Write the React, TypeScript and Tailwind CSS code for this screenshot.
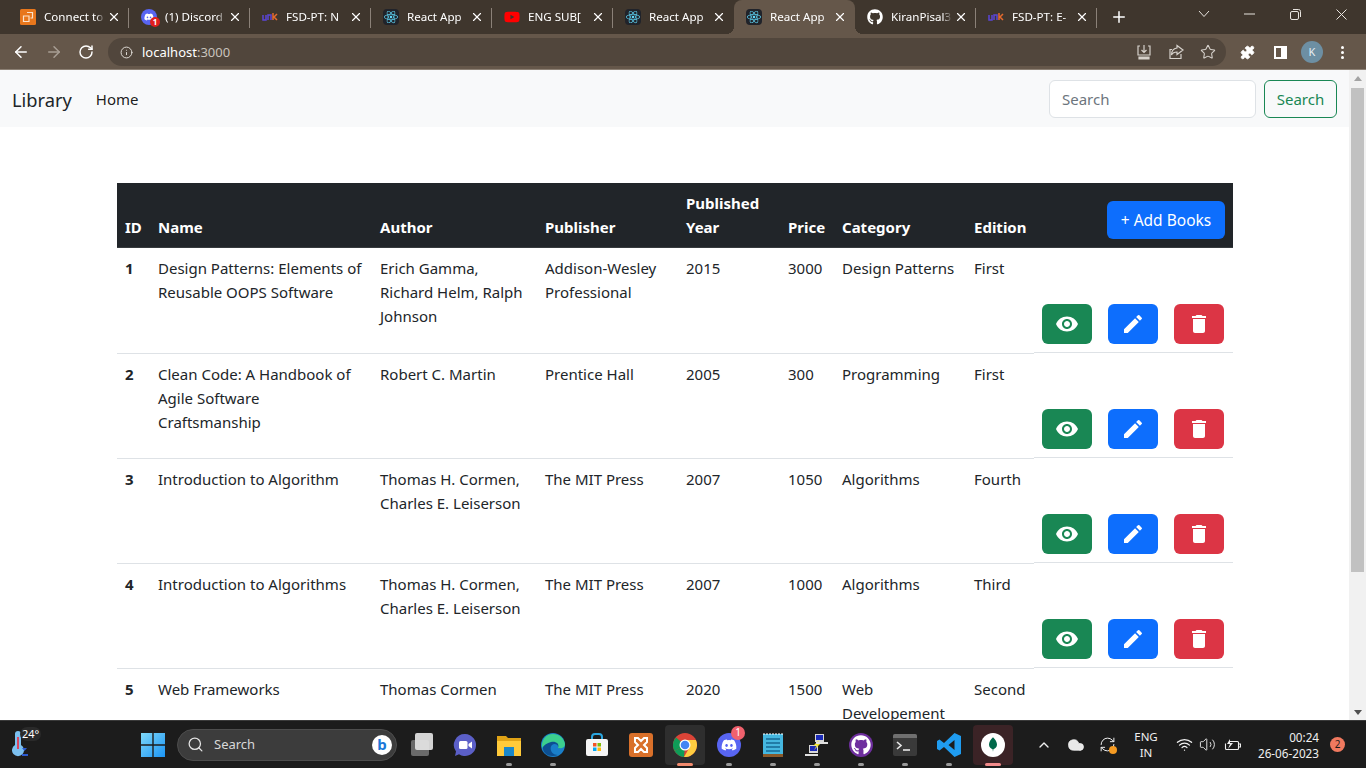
import React from "react";
import { FaDiscord, FaGithub, FaReact, FaYoutube } from "react-icons/fa";
import { MdVisibility, MdEdit, MdDelete } from "react-icons/md";
import { ArrowLeft, ArrowRight, RotateCw, Info, Star, X, Plus, Puzzle, Search, ChevronUp, Wifi, Volume2, RefreshCw, Cloud } from "lucide-react";

const UniIcon = () => (
  <svg width="16" height="16" viewBox="0 0 16 16">
    <path d="M1 6v5h3V6" fill="none" stroke="#5b45d6" strokeWidth="1.5" />
    <path d="M6 11V6h3v5" fill="none" stroke="#5b45d6" strokeWidth="1.5" />
    <path d="M11 4v7M15 5l-3 3 3 3" fill="none" stroke="#e46a2e" strokeWidth="1.5" />
  </svg>
);
const ReactFav = () => (
  <span className="flex h-4 w-4 items-center justify-center rounded-sm bg-[#20232a]">
    <FaReact size={14} color="#61dafb" />
  </span>
);

type Tab = { title: string; icon: React.ReactNode; active?: boolean };
const tabs: Tab[] = [
  { title: "Connect to", icon: <svg width="16" height="16" viewBox="0 0 16 16"><rect width="16" height="16" rx="1.500" fill="#e8771c" /><path d="M7 3.500h5.500V9H10.500M3.500 7H9v5.500H3.500z" fill="none" stroke="#fbe3cc" strokeWidth="1.200" /></svg> },
  { title: "(1) Discord", icon: <span className="relative flex h-4 w-4 items-center justify-center rounded-full bg-[#5865f2]"><FaDiscord size={10} color="white" /><span className="absolute -bottom-[2px] -right-[3px] flex h-[10px] w-[10px] items-center justify-center rounded-full bg-[#e01e1e] text-[8px] font-bold leading-none text-white">1</span></span> },
  { title: "FSD-PT: N", icon: <UniIcon /> },
  { title: "React App", icon: <ReactFav /> },
  { title: "ENG SUB[", icon: <FaYoutube size={16} color="#f00" /> },
  { title: "React App", icon: <ReactFav /> },
  { title: "React App", icon: <ReactFav />, active: true },
  { title: "KiranPisal3", icon: <FaGithub size={16} color="white" /> },
  { title: "FSD-PT: E-", icon: <UniIcon /> },
];

const books = [
  ["1", "Design Patterns: Elements of Reusable OOPS Software", "Erich Gamma, Richard Helm, Ralph Johnson", "Addison-Wesley Professional", "2015", "3000", "Design Patterns", "First"],
  ["2", "Clean Code: A Handbook of Agile Software Craftsmanship", "Robert C. Martin", "Prentice Hall", "2005", "300", "Programming", "First"],
  ["3", "Introduction to Algorithm", "Thomas H. Cormen, Charles E. Leiserson", "The MIT Press", "2007", "1050", "Algorithms", "Fourth"],
  ["4", "Introduction to Algorithms", "Thomas H. Cormen, Charles E. Leiserson", "The MIT Press", "2007", "1000", "Algorithms", "Third"],
  ["5", "Web Frameworks", "Thomas Cormen", "The MIT Press", "2020", "1500", "Web Developement", "Second"],
];

const ChromeBar = () => (
  <div className="shrink-0">
    <div className="flex h-[34px] items-start bg-[#3f362d] pl-[8px]">
      {tabs.map((t, i) => {
        const next = tabs[i + 1];
        const sep = !t.active && !(next && next.active);
        return (
          <div key={i} className={`relative flex h-[34px] w-[121px] shrink-0 items-center pl-[12px] ${t.active ? "rounded-t-lg bg-[#65574a]" : ""}`}>
            {t.active && <span className="absolute -left-[8px] bottom-0 h-[8px] w-[8px] bg-[radial-gradient(circle_at_0_0,transparent_8px,#65574a_8px)]" />}
            {t.active && <span className="absolute -right-[8px] bottom-0 h-[8px] w-[8px] bg-[radial-gradient(circle_at_100%_0,transparent_8px,#65574a_8px)]" />}
            <span className="flex w-[16px] shrink-0 items-center justify-center">{t.icon}</span>
            <span className="ml-[8px] w-[61px] overflow-hidden whitespace-nowrap text-[11.6px] text-white [mask-image:linear-gradient(to_right,black_85%,transparent)]">{t.title}</span>
            <X size={14} color="white" strokeWidth={2} className="ml-[2px]" />
            {sep && <span className="absolute right-0 top-[8px] h-[20px] w-px bg-[#8b8178]" />}
          </div>
        );
      })}
      <div className="flex h-[34px] w-[37px] items-center justify-center pl-[6px]"><Plus size={18} color="white" strokeWidth={2} /></div>
      <div className="flex h-[28px] flex-1 items-center text-[#e8e4df]">
        <svg width="12" height="8" viewBox="0 0 12 8" fill="none" stroke="currentColor" strokeWidth="1" className="ml-[64px]"><path d="M1 1l5 5.500L11 1" /></svg>
        <svg width="11" height="2" viewBox="0 0 11 2" className="ml-[34px]"><path d="M0 1h11" stroke="currentColor" strokeWidth="1" /></svg>
        <svg width="11" height="11" viewBox="0 0 11 11" fill="none" stroke="currentColor" strokeWidth="1" className="ml-[35px]"><rect x="0.500" y="2.500" width="8" height="8" rx="1.500" /><path d="M3 .5h5.500a2 2 0 0 1 2 2V8" /></svg>
        <svg width="11" height="11" viewBox="0 0 11 11" fill="none" stroke="currentColor" strokeWidth="1" className="ml-[35px]"><path d="M.5.5l10 10M10.500.5l-10 10" /></svg>
      </div>
    </div>
    <div className="flex h-[36px] items-start border-b border-[#8c8074] bg-[#65574a] pl-[12px] pt-[4px]">
      <div className="flex h-[28px] items-center">
        <ArrowLeft size={18} color="white" strokeWidth={2} />
        <ArrowRight size={18} color="#a89e94" strokeWidth={2} className="ml-[15px]" />
        <RotateCw size={16} color="white" strokeWidth={2.2} className="ml-[15px]" />
      </div>
      <div className="ml-[14px] flex h-[28px] w-[1118px] items-center rounded-full bg-[#51463c] pl-[12px]">
        <Info size={13} color="#e0dcd7" strokeWidth={1.8} />
        <span className="ml-[9px] pt-[1px] text-[13px] text-white">localhost<span className="text-[#c9c3bc]">:3000</span></span>
        <div className="ml-auto mr-[10px] flex items-center gap-[16px] text-[#d6d1cb]">
          <svg width="16" height="16" viewBox="0 0 16 16" fill="none" stroke="currentColor" strokeWidth="1.2"><path d="M4 2H2v9h12V2h-2M8 1v7M5.500 6L8 8.500 10.500 6" /><path d="M3 13h10v2H3z" fill="currentColor" /></svg>
          <svg width="16" height="16" viewBox="0 0 16 16" fill="none" stroke="currentColor" strokeWidth="1.2"><path d="M9 1.500l6 4.500-6 4.500V8C6 8 4.500 9 3.500 11c0-4 2-6.500 5.500-7zM13 10v4.500H2v-9h2" /></svg>
          <Star size={16} strokeWidth={1.6} />
        </div>
      </div>
      <div className="flex h-[28px] items-center text-white">
        <Puzzle size={15} fill="white" strokeWidth={1.5} className="ml-[14px]" />
        <span className="ml-[19px] h-[13px] w-[13px] border-2 border-r-[6px] border-white" />
        <span className="ml-[14px] flex h-[22px] w-[22px] items-center justify-center rounded-full bg-[#6d8fa3] text-[11px] text-[#e8eef2]">K</span>
        <span className="ml-[18px] flex flex-col gap-[2px]"><i className="h-[3px] w-[3px] rounded-full bg-white" /><i className="h-[3px] w-[3px] rounded-full bg-white" /><i className="h-[3px] w-[3px] rounded-full bg-white" /></span>
      </div>
    </div>
  </div>
);

const Navbar = () => (
  <nav className="flex h-[57px] items-center bg-[#f8f9fa] pl-[12px] pr-[12px]">
    <span className="pt-[3px] text-[18.300px] text-[#212529]">Library</span>
    <span className="ml-[24px] pt-[2px] text-[15px] text-[#000000e6]">Home</span>
    <div className="ml-auto flex gap-[8px]">
      <div className="flex h-[38px] w-[207px] items-center rounded-[6px] border border-[#dee2e6] bg-white pl-[12px] pt-[1px] text-[15px] text-[#6c757d]">Search</div>
      <div className="flex h-[38px] w-[73px] items-center justify-center rounded-[6px] border border-[#198754] pt-[1px] text-[15px] text-[#198754]">Search</div>
    </div>
  </nav>
);

const ActionBtn = ({ bg, children }: { bg: string; children: React.ReactNode }) => (
  <span className={`flex h-[40px] w-[50px] items-center justify-center rounded-[6px] ${bg}`}>{children}</span>
);

const BookTable = () => (
  <div className="pl-[117px] pt-[56px]">
    <table className="w-[1116px] table-fixed border-separate border-spacing-0 text-[15px] leading-[24px] text-[#212529]">
      <colgroup>
        <col className="w-[33px]" /><col className="w-[222px]" /><col className="w-[165px]" /><col className="w-[141px]" /><col className="w-[102px]" /><col className="w-[54px]" /><col className="w-[132px]" /><col className="w-[68px]" /><col className="w-[199px]" />
      </colgroup>
      <thead>
        <tr className="bg-[#212529] text-white">
          {["ID", "Name", "Author", "Publisher", "Published Year", "Price", "Category", "Edition"].map((h) => (
            <th key={h} className="border-b border-[#373b3e] p-[8px] text-left align-bottom font-bold">{h}</th>
          ))}
          <th className="border-b border-[#373b3e] p-[8px] align-bottom">
            <span className="ml-auto flex h-[38px] w-[118px] items-center justify-center rounded-[6px] bg-[#0d6efd] text-[15.5px] font-normal text-white">+ Add Books</span>
          </th>
        </tr>
      </thead>
      <tbody>
        <tr className="h-px"><td colSpan={9} className="p-0" /></tr>
        {books.map((b, r) => (
          <tr key={b[0]} className="h-[105px]">
            {b.map((c, i) => (
              <td key={i} className={`border-b border-[#dee2e6] px-[8px] pb-[8px] align-top ${r === 0 ? "pt-[7px]" : "pt-[8px]"} ${i === 0 ? "font-bold" : ""}`}>{c}</td>
            ))}
            <td className="p-0 align-top">
              <div className="flex h-[104px] items-end justify-end gap-[16px] border-b border-[#dee2e6] pb-[8px] pr-[9px]">
                <ActionBtn bg="bg-[#198754]"><MdVisibility size={24} color="white" /></ActionBtn>
                <ActionBtn bg="bg-[#0d6efd]"><MdEdit size={24} color="white" /></ActionBtn>
                <ActionBtn bg="bg-[#dc3545]"><MdDelete size={24} color="white" /></ActionBtn>
              </div>
            </td>
          </tr>
        ))}
      </tbody>
    </table>
  </div>
);

const ScrollBar = () => (
  <div className="flex w-[17px] shrink-0 flex-col items-center bg-[#f1f1f1]">
    <span className="mt-[6px] h-0 w-0 border-x-[4px] border-b-[5px] border-x-transparent border-b-[#a3a3a3]" />
    <span className="mt-[7px] h-[484px] w-[13px] bg-[#c1c1c1]" />
    <span className="mt-auto mb-[5px] h-0 w-0 border-x-[4px] border-t-[5px] border-x-transparent border-t-[#505050]" />
  </div>
);

const TaskItem = ({ children, active, dot, dotColor, bg }: { children: React.ReactNode; active?: boolean; dot?: boolean; dotColor?: string; bg?: string }) => (
  <div className="relative flex h-[48px] w-[44px] shrink-0 items-center justify-center">
    {active && <span className={`absolute left-[2px] top-[4px] h-[40px] w-[40px] rounded-[4px] ${bg}`} />}
    <span className="relative flex h-[24px] w-[24px] items-center justify-center">{children}</span>
    {dot && <span className={`absolute bottom-[3px] left-1/2 h-[3px] -translate-x-1/2 rounded-full ${active ? "w-[16px]" : "w-[6px]"} ${dotColor ?? "bg-[#9a9a9a]"}`} />}
  </div>
);

const Taskbar = () => (
  <div className="flex h-[48px] shrink-0 items-center border-t border-[#3a3a3a] bg-[#1c1c1c] text-white">
    <div className="relative flex h-[48px] w-[131px] shrink-0 pl-[12px] pt-[8px]">
      <svg width="16" height="28" viewBox="0 0 16 28"><path d="M6 2a3 3 0 0 1 3 3v11a6 6 0 1 1-6 0V5a3 3 0 0 1 3-3z" fill="#7cc0f0" /><path d="M5 8h2v12H5z" fill="#d9455f" /><path d="M10 19h5l-2.500 3zM10 25h6v2h-6z" fill="#2d5bd0" /></svg>
      <span className="absolute left-[20px] top-[6px] rounded-full bg-[#2a2a2a] px-[2px] text-[11px] leading-[14px]">24°</span>
    </div>
    <TaskItem>
      <svg width="24" height="24" viewBox="0 0 24 24"><defs><linearGradient id="w" x1="0" y1="0" x2="1" y2="1"><stop offset="0" stopColor="#7fd8f8" /><stop offset="1" stopColor="#1a94f5" /></linearGradient></defs><path d="M0 0h11.300v11.300H0zM12.700 0H24v11.300H12.700zM0 12.700h11.300V24H0zM12.700 12.700H24V24H12.700z" fill="url(#w)" /></svg>
    </TaskItem>
    <div className="ml-[2px] flex h-[32px] w-[220px] shrink-0 items-center rounded-full border border-[#4d4d4d] bg-[#3c3c3c] pl-[9px]">
      <Search size={17} color="#e5e5e5" strokeWidth={1.8} />
      <span className="ml-[10px] text-[13px] text-[#d8d8d8]">Search</span>
      <span className="ml-auto mr-[4px] flex h-[20px] w-[20px] items-center justify-center rounded-full bg-white text-[15px] font-bold leading-none text-[#1b78d8]">b</span>
    </div>
    <div className="ml-[2px] flex">
      <TaskItem><span className="absolute bottom-[1px] left-[2px] h-[16px] w-[18px] rounded-[2px] bg-[#6a6a6a]" /><span className="absolute right-[0px] top-[0px] h-[17px] w-[18px] rounded-[2px] bg-[#e8e8e8]/90" /></TaskItem>
      <TaskItem><svg width="24" height="24" viewBox="0 0 24 24"><path d="M12 1a11 11 0 1 1-6 20.200L2 23l1-4.500A11 11 0 0 1 12 1z" fill="#5b5fc7" /><rect x="6" y="8" width="8.500" height="8" rx="1.500" fill="white" /><path d="M15.500 11l3.500-2.500v7L15.500 13z" fill="white" /></svg></TaskItem>
      <TaskItem dot><svg width="24" height="22" viewBox="0 0 24 22"><path d="M0 2h9l2 2h13v5H0z" fill="#e0a316" /><path d="M0 7h24v15H0z" fill="#ffca3a" /><path d="M7 13h10v9H7z" fill="#1a87c9" /></svg></TaskItem>
      <TaskItem dot><svg width="24" height="24" viewBox="0 0 24 24"><circle cx="12" cy="12" r="12" fill="#1a7fc9" /><path d="M2 15C2 8 8 5 13 5c5 0 9 3 9 7 0 3-3 3.500-5 3 1-4-4-5-6-3-3 3-1 10 6 10-8 3-15-1-15-7z" fill="#0d4f91" /><path d="M12 1c6 0 11 4 12 10 0 4-4 5-7 4 2-5-3-7-7-6C6 10 3 12 1 15 0 7 5 1 12 1z" fill="#3ccf8e" /></svg></TaskItem>
      <TaskItem><svg width="24" height="24" viewBox="0 0 24 24"><path d="M7 6V4a3 3 0 0 1 3-3h4a3 3 0 0 1 3 3v2" fill="none" stroke="#2aa6e0" strokeWidth="2" /><rect x="1" y="6" width="22" height="17" rx="2" fill="#f5f5f5" /><path d="M8 10h3.500v3.500H8z" fill="#f35325" /><path d="M12.500 10H16v3.500h-3.500z" fill="#81bc06" /><path d="M8 14.500h3.500V18H8z" fill="#05a6f0" /><path d="M12.500 14.500H16V18h-3.500z" fill="#ffba08" /></svg></TaskItem>
      <TaskItem><span className="flex h-[24px] w-[24px] items-center justify-center rounded-[3px] bg-[#d9702a]"><svg width="18" height="18" viewBox="0 0 18 18" fill="none" stroke="white" strokeWidth="2"><path d="M3 2h3l3 3 3-3h3v4l-3 3 3 3v4h-3l-3-3-3 3H3v-4l3-3-3-3z" /></svg></span></TaskItem>
      <TaskItem dot active dotColor="bg-[#f28b6e]" bg="bg-[#2e2e2e]"><svg width="24" height="24" viewBox="0 0 24 24"><circle cx="12" cy="12" r="12" fill="#db4437" /><path d="M12 12L1.600 18A12 12 0 0 1 3 4.500z" fill="#0f9d58" /><path d="M12 12l-1 12A12 12 0 0 1 1.600 18z" fill="#0f9d58" /><path d="M12 7h10.900A12 12 0 0 1 11 24l5.500-9.500z" fill="#ffcd40" /><circle cx="12" cy="12" r="5.500" fill="white" /><circle cx="12" cy="12" r="4.300" fill="#4285f4" /></svg></TaskItem>
      <TaskItem dot><span className="flex h-[24px] w-[24px] items-center justify-center rounded-full bg-[#5865f2]"><FaDiscord size={16} color="white" /></span><span className="absolute -right-[4px] -top-[7px] flex h-[14px] w-[14px] items-center justify-center rounded-full bg-[#f0616d] text-[10px] text-white">1</span></TaskItem>
      <TaskItem dot><svg width="20" height="24" viewBox="0 0 20 24"><path d="M0 1h20v21H0z" fill="#45b7e0" /><path d="M0 21h20v3H0z" fill="#8a5a2b" /><path d="M3 6h14M3 10h14M3 14h14M3 18h14" stroke="#166a94" strokeWidth="1.500" /><path d="M1 0v2M4 0v2M7 0v2M10 0v2M13 0v2M16 0v2M19 0v2" stroke="white" /></svg></TaskItem>
      <TaskItem dot><svg width="24" height="24" viewBox="0 0 24 24"><path d="M10 1h9v8h-9z" fill="#d8d8d8" /><path d="M11 2h7v5h-7z" fill="#1b2bb8" /><path d="M4 12h9v8H4z" fill="#d8d8d8" /><path d="M5 13h7v5H5z" fill="#1b2bb8" /><path d="M14 7L8 13l4-1-3 5 7-7-4 1z" fill="#f5e625" /><path d="M0 21h13v2H0zM11 9h12v2H11z" fill="#e0e0e0" /></svg></TaskItem>
      <TaskItem dot><span className="flex h-[24px] w-[24px] items-center justify-center rounded-full bg-[#6e2f9e]"><FaGithub size={20} color="white" /></span></TaskItem>
      <TaskItem dot><svg width="24" height="22" viewBox="0 0 24 22"><rect width="24" height="22" rx="2" fill="#3a3a3a" /><path d="M0 2a2 2 0 0 1 2-2h20a2 2 0 0 1 2 2v2H0z" fill="#6f6f6f" /><path d="M4 8l4 3.500L4 15" fill="none" stroke="#e8e8e8" strokeWidth="1.600" /><path d="M10 16h7" stroke="#e8e8e8" strokeWidth="1.600" /></svg></TaskItem>
      <TaskItem dot><svg width="24" height="24" viewBox="0 0 24 24"><path d="M17.500 0L24 3v18l-6.500 3L7 14l-4.500 3.500L0 16V8l2.500-1.500L7 10zM17.500 7L11.500 12l6 5z" fill="#1f9cf0" /></svg></TaskItem>
      <TaskItem dot active dotColor="bg-[#f28b8b]" bg="bg-[#3b2326]"><span className="flex h-[24px] w-[24px] items-center justify-center rounded-full bg-white"><svg width="8" height="17" viewBox="0 0 10 18"><path d="M5 0c3 3 5 6 5 9 0 3-2 5-4.500 6L5 18l-.5-3C2 14 0 12 0 9c0-3 2-6 5-9z" fill="#00684a" /></svg></span></TaskItem>
    </div>
    <div className="relative ml-auto flex h-[48px] w-[331px] shrink-0 items-center text-[#f0f0f0]">
      <ChevronUp size={16} strokeWidth={2} className="ml-[1px]" />
      <Cloud size={18} fill="#e8e8e8" strokeWidth={1} className="ml-[15px]" />
      <span className="relative ml-[14px]"><RefreshCw size={17} strokeWidth={1.4} /><span className="absolute -bottom-[1px] -right-[1px] h-[8px] w-[8px] rounded-full bg-[#f59b23]" /></span>
      <span className="ml-[15px] w-[30px] text-center text-[11.500px] leading-[16px]">ENG<br />IN</span>
      <Wifi size={17} strokeWidth={1.8} className="ml-[15px]" />
      <Volume2 size={17} strokeWidth={1.3} className="ml-[6px]" />
      <svg width="17" height="12" viewBox="0 0 17 12" fill="none" stroke="currentColor" strokeWidth="1.100" className="ml-[8px]"><path d="M6 2.500h7.500a1 1 0 0 1 1 1v6a1 1 0 0 1-1 1h-11a1 1 0 0 1-1-1v-5" /><path d="M15 5h1.500v3H15" /><path d="M6 0L3 5h3L4 10l5-6H6z" fill="currentColor" stroke="none" /></svg>
      <span className="ml-auto mr-[47px] text-right text-[11.700px] leading-[16px]">00:24<br />26-06-2023</span>
      <span className="absolute right-[21px] top-[16px] flex h-[15px] w-[15px] items-center justify-center rounded-full bg-[#f0795f] text-[10px] text-[#1c1c1c]">2</span>
    </div>
  </div>
);

export default function App() {
  return (
    <div className="flex h-[768px] w-[1366px] flex-col overflow-hidden bg-white font-['Noto_Sans',sans-serif]">
      <ChromeBar />
      <div className="flex min-h-0 flex-1">
        <div className="min-w-0 flex-1 overflow-hidden">
          <Navbar />
          <BookTable />
        </div>
        <ScrollBar />
      </div>
      <Taskbar />
    </div>
  );
}
